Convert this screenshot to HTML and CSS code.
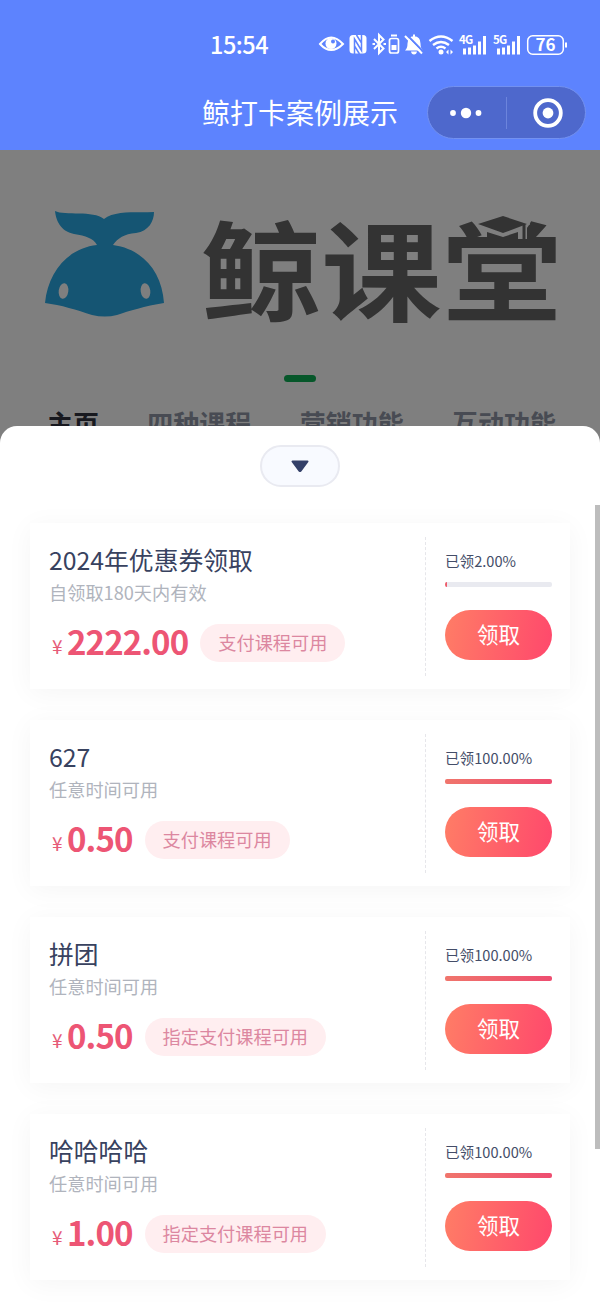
FILE: index.html
```html
<!DOCTYPE html>
<html lang="zh-CN">
<head>
    <meta charset="UTF-8">
    <meta name="viewport" content="width=device-width, initial-scale=1.0">
    <title>鲸打卡案例展示</title>
    <link rel="stylesheet" href="styles.css">
</head>
<body>
    <header class="header">
        <div class="status-bar">
            <span class="time">15:54</span>
            <svg class="status-icons" width="250" height="26" viewBox="0 0 250 26" fill="none" stroke="#fff" stroke-width="2">
                <!-- eye -->
                <path d="M2 13Q13 0 25 13Q13 25 2 13Z"/>
                <circle cx="13" cy="12.500" r="5.500" fill="#fff" stroke="none"/>
                <circle cx="15" cy="10.500" r="2" fill="#5d83fe" stroke="none"/>
                <!-- nfc -->
                <rect x="31.500" y="4" width="17" height="18.500" rx="3.500" fill="#fff" stroke="none"/>
                <path d="M36.500 23V8L43.500 19.500V4M38.500 4L43.500 12M36.500 15L41.500 23" stroke="#5d83fe" stroke-width="1.500"/>
                <!-- bluetooth and its battery -->
                <path d="M56 8l9.500 9.500-4.500 4.500V4l4.500 4.500-9.500 9.500" stroke-width="2"/>
                <path d="M54.500 13h2.500M65.500 13h2.500"/>
                <rect x="71.500" y="7.500" width="9" height="14.500" rx="2" stroke-width="1.700"/>
                <path d="M73 4.500h6" stroke-width="2"/>
                <rect x="73.500" y="14" width="5" height="5" fill="#fff" stroke="none"/>
                <!-- muted bell -->
                <path d="M87 19.500q2.500-2 2.500-7 0-7 6.500-7.500 6.500.500 6.500 7.500 0 5 2.500 7zM93 20.500h6q-.500 3-3 3t-3-3zM95 3.500h2v2h-2z" fill="#fff" stroke="none"/>
                <path d="M88.500 3.500l17 17.500" stroke="#5d83fe" stroke-width="2"/>
                <path d="M87 5l17 17.500" stroke-width="2"/>
                <!-- wifi -->
                <path d="M111.500 10q11.500-9 23 0M115 14q8-6 16 0M118.500 17.500q4.500-3.300 9 0" stroke-width="2.400"/>
                <circle cx="123" cy="21" r="2.500" fill="#fff" stroke="none"/>
                <path d="M128 21l2.500-2.500v5zM135 21l-2.500-2.500v5z" fill="#fff" stroke="none"/>
                <!-- signal bars -->
                <path d="M146.500 23.500v-6M151.500 23.500v-7M156.500 23.500v-9M161.500 23.500v-13M166.500 23.500V5" stroke-width="3"/>
                <path d="M180.500 23.500v-6M185.500 23.500v-7M190.500 23.500v-9M195.500 23.500v-13M200.500 23.500V5" stroke-width="3"/>
                <text class="network" x="141" y="13">4G</text>
                <text class="network" x="175" y="13">5G</text>
                <!-- battery -->
                <rect x="209.700" y="4.700" width="35.600" height="18.600" rx="5" stroke-width="1.500"/>
                <path d="M248 11.500v5" stroke-width="2"/>
                <text class="battery" x="227.500" y="20">76</text>
            </svg>
        </div>
        <div class="nav-bar">
            <h1 class="nav-title">鲸打卡案例展示</h1>
            <div class="capsule">
                <svg width="34" height="12" viewBox="0 0 34 12" fill="#fff">
                    <circle cx="4" cy="6" r="2.900"/>
                    <circle cx="17" cy="6" r="5.200"/>
                    <circle cx="29.500" cy="6" r="2.900"/>
                </svg>
                <span class="capsule-line"></span>
                <svg width="30" height="30" viewBox="0 0 30 30">
                    <circle cx="15" cy="15" r="12.800" fill="none" stroke="#fff" stroke-width="3.800"/>
                    <circle cx="15" cy="15" r="5.400" fill="#fff"/>
                </svg>
            </div>
        </div>
    </header>

    <section class="page">
        <div class="banner">
            <svg class="whale" width="120" height="108" viewBox="0 0 120 108">
                <path fill="#2aaae6" d="M10 0C20 5 48 -1 59 8C70 -1 93 2 109 1C109 10 104 20 91 22C79 23 73 27 68 34C98 38 117 61 119 92C100 95 84 100 72 104Q60 107 47 104C32 99 16 94 0 92C3 61 23 37 52 34C48 27 41 25 29 23C15 20 11 9 10 0Z"/>
                <ellipse cx="18.500" cy="80" rx="4.800" ry="7.800" fill="#fff" transform="rotate(8 18.500 80)"/>
                <ellipse cx="100.500" cy="80" rx="4.800" ry="7.800" fill="#fff" transform="rotate(-8 100.500 80)"/>
            </svg>
            <div class="wordmark">
                <span class="wordmark-text">鲸课堂</span>
                <svg class="cap" width="54" height="30" viewBox="0 0 54 30">
                    <path d="M13 0H51V23H13Z" fill="#fff"/>
                    <path d="M11 16L27 21L42 16V27H11Z" fill="#676767"/>
                    <path d="M27 17L2 8L27 0L51 8L27 17Z" fill="#676767" stroke="#fff" stroke-width="3" paint-order="stroke"/>
                    <path d="M48 8V23" stroke="#676767" stroke-width="3"/>
                </svg>
            </div>
        </div>
        <div class="dots"><span class="dot"></span></div>
        <nav class="tabs">
            <span class="tab active">主页</span>
            <span class="tab">四种课程</span>
            <span class="tab">营销功能</span>
            <span class="tab">互动功能</span>
        </nav>
        <div class="mask"></div>
    </section>

    <main class="sheet">
        <button class="close-button" aria-label="收起">
            <svg width="18" height="13" viewBox="0 0 18 13">
                <path d="M1.500 1.500h15L9.500 11h-1z" fill="#344069" stroke="#344069" stroke-width="2" stroke-linejoin="round"/>
            </svg>
        </button>
        <div class="scrollbar"></div>

        <div class="coupon-list">
            <article class="coupon">
                <div class="coupon-info">
                    <h2 class="coupon-title">2024年优惠券领取</h2>
                    <p class="coupon-date">自领取180天内有效</p>
                    <div class="coupon-row">
                        <span class="yen">¥</span>
                        <span class="price">2222.00</span>
                        <span class="tag">支付课程可用</span>
                    </div>
                </div>
                <div class="coupon-side">
                    <span class="percent">已领2.00%</span>
                    <div class="progress"><div class="progress-bar" style="width: 2%"></div></div>
                    <button class="get-button">领取</button>
                </div>
            </article>

            <article class="coupon">
                <div class="coupon-info">
                    <h2 class="coupon-title">627</h2>
                    <p class="coupon-date">任意时间可用</p>
                    <div class="coupon-row">
                        <span class="yen">¥</span>
                        <span class="price">0.50</span>
                        <span class="tag">支付课程可用</span>
                    </div>
                </div>
                <div class="coupon-side">
                    <span class="percent">已领100.00%</span>
                    <div class="progress"><div class="progress-bar" style="width: 100%"></div></div>
                    <button class="get-button">领取</button>
                </div>
            </article>

            <article class="coupon">
                <div class="coupon-info">
                    <h2 class="coupon-title">拼团</h2>
                    <p class="coupon-date">任意时间可用</p>
                    <div class="coupon-row">
                        <span class="yen">¥</span>
                        <span class="price">0.50</span>
                        <span class="tag">指定支付课程可用</span>
                    </div>
                </div>
                <div class="coupon-side">
                    <span class="percent">已领100.00%</span>
                    <div class="progress"><div class="progress-bar" style="width: 100%"></div></div>
                    <button class="get-button">领取</button>
                </div>
            </article>

            <article class="coupon">
                <div class="coupon-info">
                    <h2 class="coupon-title">哈哈哈哈</h2>
                    <p class="coupon-date">任意时间可用</p>
                    <div class="coupon-row">
                        <span class="yen">¥</span>
                        <span class="price">1.00</span>
                        <span class="tag">指定支付课程可用</span>
                    </div>
                </div>
                <div class="coupon-side">
                    <span class="percent">已领100.00%</span>
                    <div class="progress"><div class="progress-bar" style="width: 100%"></div></div>
                    <button class="get-button">领取</button>
                </div>
            </article>
        </div>
    </main>
</body>
</html>
```
FILE: styles.css
```css
* {
    box-sizing: border-box;
}

body {
    margin: 0;
    height: 1303px;
    overflow: hidden;
    background-color: #808080;
    font-family: "Noto Sans CJK SC", "Noto Sans", sans-serif;
}

h1, h2, p {
    margin: 0;
    font-weight: 400;
}

button {
    padding: 0;
    border: none;
    font-family: inherit;
    cursor: pointer;
}

/* Header */
.header {
    height: 150px;
    background-color: #5d83fe;
    color: #fff;
}

.status-bar {
    display: flex;
    align-items: center;
    height: 86px;
    padding: 2px 32px 0 210px;
}

.time {
    flex: 1;
    font-size: 23.5px;
    font-weight: 500;
    letter-spacing: -0.5px;
}

.network {
    font: 700 11.5px "Noto Sans CJK SC", sans-serif;
    fill: #fff;
    stroke: #5d83fe;
    stroke-width: 2px;
    paint-order: stroke;
    letter-spacing: -0.8px;
}

.battery {
    font: 700 17px "Noto Sans CJK SC", sans-serif;
    fill: #fff;
    stroke: none;
    text-anchor: middle;
}

.nav-bar {
    display: flex;
    align-items: center;
    justify-content: space-between;
    height: 53px;
    padding: 0 14px 0 202px;
}

.nav-title {
    font-size: 28px;
    line-height: 53px;
}

.capsule {
    display: flex;
    align-items: center;
    justify-content: space-between;
    width: 159px;
    height: 53px;
    padding: 0 22px 0 21px;
    border: 1px solid #7391f0;
    border-radius: 27px;
    background-color: #4e68cc;
}

.capsule-line {
    width: 1px;
    height: 32px;
    margin-right: 3px;
    background-color: #6c84dc;
}

/* Page behind the sheet */
.page {
    position: relative;
    height: 296px;
    background-color: #fff;
    overflow: hidden;
}

.mask {
    position: absolute;
    inset: 0;
    background-color: rgba(0, 0, 0, 0.5);
}

.banner {
    display: flex;
    height: 225px;
    padding: 61px 0 0 45px;
}

.wordmark {
    position: relative;
    margin-left: 36px;
    font-size: 118px;
    font-weight: 700;
    line-height: 122px;
    color: #676767;
}

.wordmark-text {
    display: block;
    transform: scale(1.02, 0.91);
    transform-origin: 0 0;
}

.cap {
    position: absolute;
    left: 275px;
    top: 5px;
}

.dots {
    display: flex;
    justify-content: center;
}

.dot {
    width: 32px;
    height: 7px;
    border-radius: 4px;
    background-color: #0cae55;
}

.tabs {
    display: flex;
    justify-content: space-between;
    padding: 23px 44px 0 47px;
    font-size: 26px;
    font-weight: 700;
    line-height: 36px;
}

.tab {
    color: #9097a6;
}

.tab.active {
    color: #30323e;
}

/* Coupon sheet */
.sheet {
    position: relative;
    height: 877px;
    margin-top: -20px;
    padding-top: 19px;
    border-radius: 17px 17px 0 0;
    background-color: #fff;
}

.close-button {
    display: flex;
    align-items: center;
    justify-content: center;
    width: 80px;
    height: 42px;
    margin: 0 auto;
    border: 2px solid #e9eaf1;
    border-radius: 21px;
    background-color: #f8faff;
}

.scrollbar {
    position: absolute;
    right: 0;
    top: 79px;
    width: 5px;
    height: 644px;
    background-color: #bdbdbd;
}

.coupon-list {
    display: flex;
    flex-direction: column;
    gap: 31px;
    padding: 36px 30px 0;
}

.coupon {
    display: flex;
    height: 166px;
    padding: 14px 18px 13px 19px;
    background-color: #fff;
    box-shadow: 0 4px 26px rgba(0, 0, 0, 0.045);
}

.coupon-info {
    flex: 1;
    padding-top: 5px;
}

.coupon-title {
    font-size: 24.8px;
    line-height: 34px;
    color: #38425f;
}

.coupon-date {
    font-size: 18.2px;
    line-height: 33px;
    color: #b0b4bd;
}

.coupon-row {
    display: flex;
    align-items: center;
    height: 38px;
    margin-top: 15px;
}

.yen {
    width: 19px;
    padding: 6px 0 0 3px;
    font-size: 19px;
    line-height: 20px;
    color: #e65b78;
}

.price {
    margin: -4px 12px 0 -1px;
    font-size: 33px;
    font-weight: 700;
    line-height: 38px;
    letter-spacing: -0.9px;
    color: #ed5574;
}

.tag {
    padding: 0 18px 1px;
    border-radius: 19px;
    background-color: #ffeef0;
    color: #dc87a0;
    font-size: 18.2px;
    line-height: 37px;
}

.coupon-side {
    display: flex;
    flex-direction: column;
    width: 127px;
    padding: 13px 0 0 19px;
    border-left: 1px dashed #e6e6ea;
}

.percent {
    font-size: 14.6px;
    line-height: 21px;
    color: #444d68;
}

.progress {
    height: 5px;
    margin: 11px 0 23px;
    border-radius: 2px;
    background-color: #e9eaf0;
    overflow: hidden;
}

.progress-bar {
    height: 100%;
    background: linear-gradient(90deg, #f0756c, #ee4d70);
}

.get-button {
    height: 50px;
    padding-bottom: 4px;
    border-radius: 25px;
    background: linear-gradient(100deg, #ff7d66, #ff486c);
    color: #fff;
    font-size: 21.5px;
}
```
